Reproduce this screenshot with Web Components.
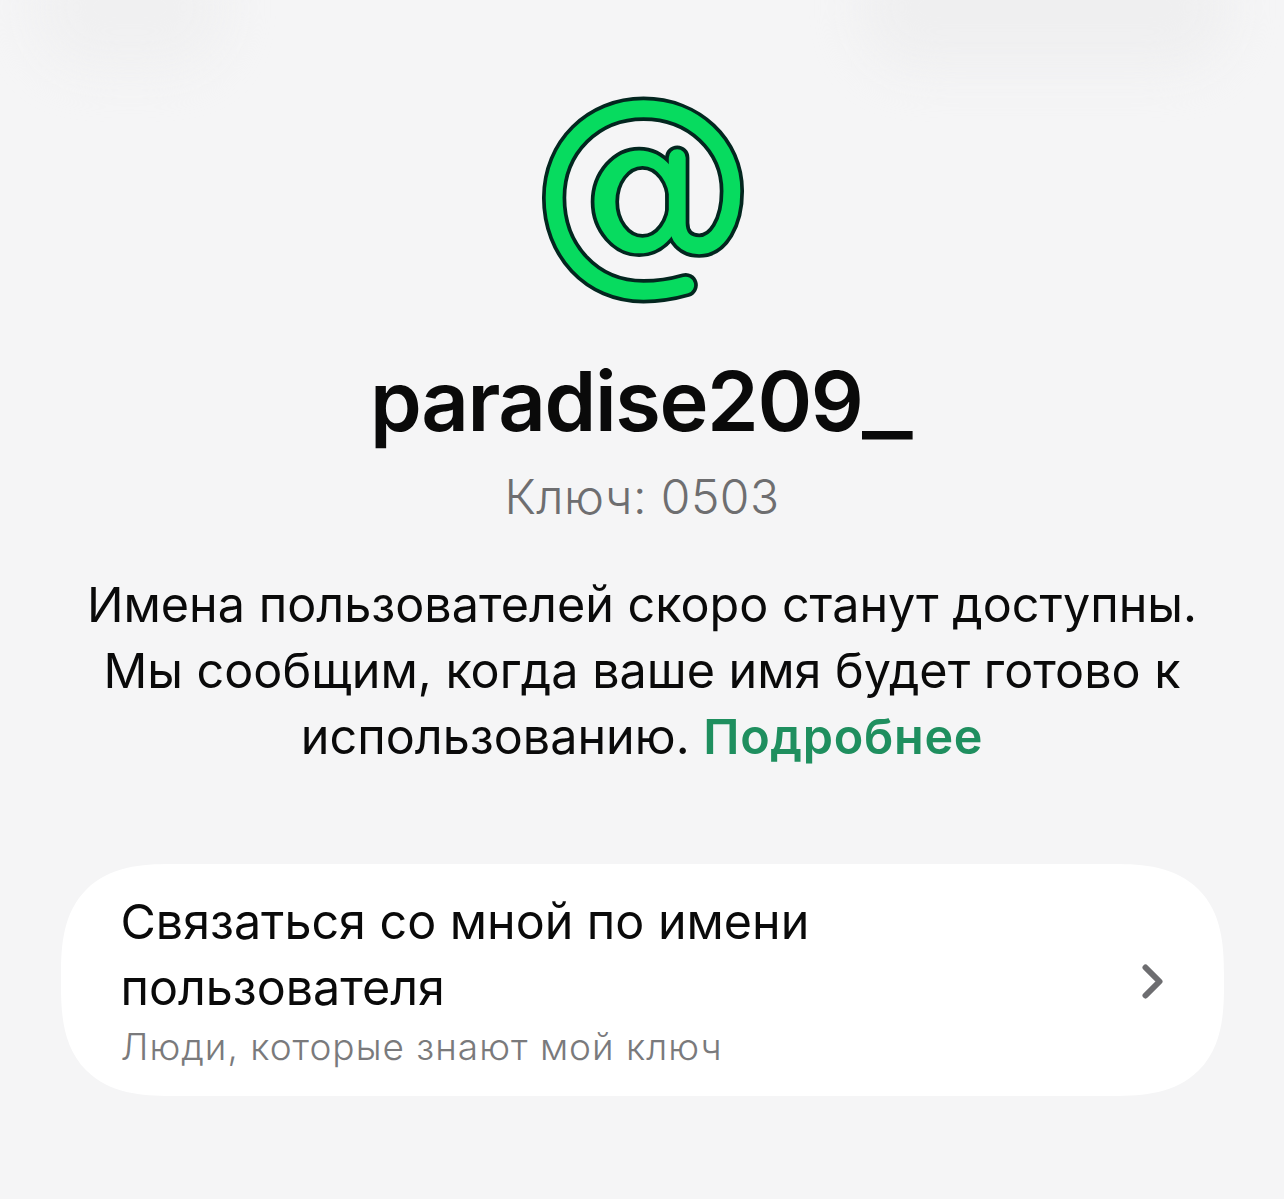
<!DOCTYPE html>
<html lang="ru"><head><meta charset="utf-8"><title>Имя пользователя</title>
<style>
html,body{margin:0;padding:0;background:#f5f5f6}
body{font-family:Inter,"Liberation Sans",sans-serif;width:1284px;height:1199px;overflow:hidden}
</style></head><body>
<username-screen>
  <at-logo></at-logo>
  <profile-head name="paradise209" key="Ключ: 0503"></profile-head>
  <info-text>Имена пользователей скоро станут доступны.<br>Мы сообщим, когда ваше имя будет готово к<br>использованию. <a href="#">Подробнее</a></info-text>
  <option-card sub="Люди, которые знают мой ключ">Связаться со мной по имени<br>пользователя</option-card>
</username-screen>
<script>
function def(name,html,init){customElements.define(name,class extends HTMLElement{
  constructor(){super();this.attachShadow({mode:'open'}).innerHTML=html;}
  connectedCallback(){if(init)init(this,this.shadowRoot);}
});}
def('username-screen',`<style>
:host{display:flex;flex-direction:column;align-items:center;position:relative;width:1284px;height:1199px;overflow:hidden;padding-top:80px;box-sizing:border-box;color:#0a0a0a}
.s{position:absolute;filter:blur(22px);border-radius:60px}
.a{left:35px;top:-55px;width:190px;height:125px;background:#f0f0f1}
.c{left:860px;top:-55px;width:370px;height:125px;background:#efeff0}
::slotted(*){position:relative}
</style><div class="s a"></div><div class="s c"></div><slot></slot>`);
const hook='M495 614C450 627 410 632 370 632C215 632 105 510 105 355C105 205 220 91 370 91C520 91 632 200 632 335C632 430 590 497 535 497C495 497 470 470 470 430L470 236';
def('at-logo',`<style>:host{display:flex;justify-content:center;width:254px;height:240px}svg{display:block;margin-top:-2px}</style>
<svg width="253" height="243" viewBox="-8 0 750 720" fill="none" stroke-linecap="round" stroke-linejoin="round" aria-hidden="true">
<path d="${hook}" stroke="#03261f" stroke-width="72"/>
<path fill="#07db5f" fill-rule="evenodd" stroke="#03261f" stroke-width="11" d="M357 209C282 209 219 281 219 367C219 453 282 525 357 525C432 525 493 453 493 367C493 281 432 209 357 209ZM367 266C408 266 442 311 442 367C442 423 408 468 367 468C326 468 292 423 292 367C292 311 326 266 367 266Z"/>
<path d="${hook}" stroke="#07db5f" stroke-width="50"/>
</svg>`);
def('profile-head',`<style>
:host{display:flex;flex-direction:column;align-items:center;margin-top:37px}
.n{font-size:83px;font-weight:580;line-height:88px;letter-spacing:-1.4px;white-space:nowrap}
.u{display:inline-block;transform:scaleX(1.3);transform-origin:left;margin-right:14px}
.k{font-size:48px;line-height:58px;color:#6e6e70;margin-top:23px;font-weight:350;letter-spacing:.45px}
</style><div class="n"><span class="v"></span><span class="u">_</span></div><div class="k"></div>`,(h,s)=>{s.querySelector('.v').textContent=h.getAttribute('name');s.querySelector('.k').textContent=h.getAttribute('key');});
def('info-text',`<style>
:host{display:block;margin-top:46px;text-align:center;font-size:48.5px;line-height:66px;color:#0a0a0a}
::slotted(a){color:#1f8f5f;font-weight:600;letter-spacing:.7px;text-decoration:none}
</style><slot></slot>`);
def('option-card',`<style>
:host{display:flex;align-items:center;justify-content:space-between;box-sizing:border-box;width:1163px;height:232px;margin-top:94px;padding:0 61px 1px 60px;background:#fff;border-radius:88px}
@supports (corner-shape:squircle){:host{border-radius:110px;corner-shape:superellipse(1.4)}}
.t{font-size:48.4px;line-height:66px}
.s{font-size:37px;line-height:46px;color:#7a7a7c;letter-spacing:1px;margin-top:3px;font-weight:350}
svg{display:block;margin-top:4px}
</style><div><div class="t"><slot></slot></div><div class="s"></div></div>
<svg width="21" height="35" viewBox="0 0 21 35" fill="none" aria-hidden="true"><path d="M3.5 3.5L17.5 17.5L3.5 31.5" stroke="#6d6d70" stroke-width="6" stroke-linecap="round" stroke-linejoin="round"/></svg>`,(h,s)=>{s.querySelector('.s').textContent=h.getAttribute('sub');});
</script>
</body></html>
